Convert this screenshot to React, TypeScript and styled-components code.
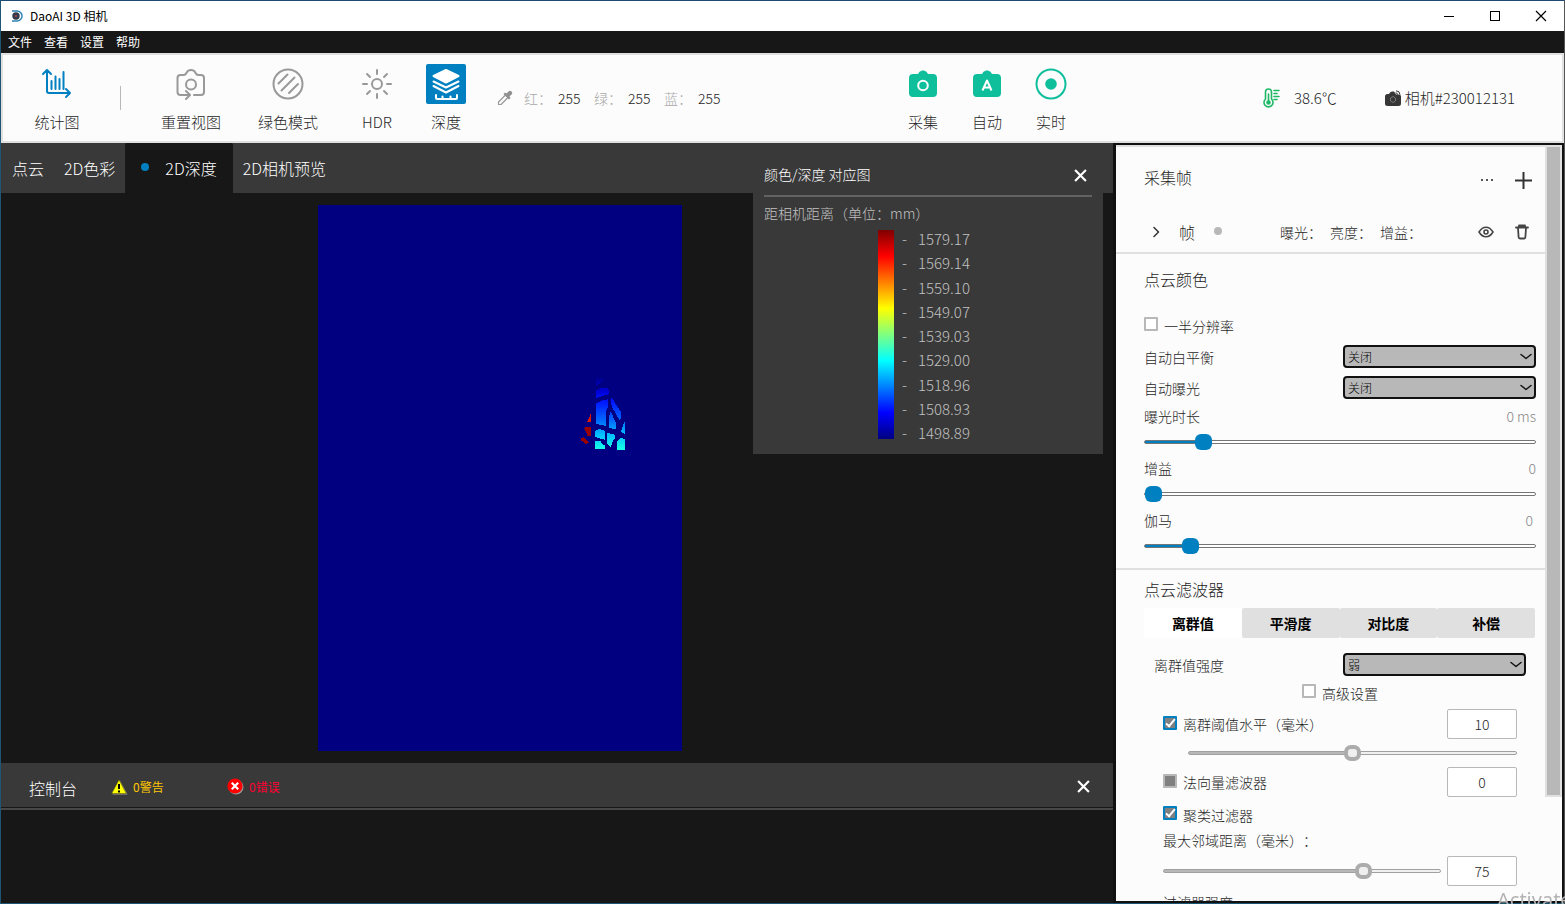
import React, { useState } from "react";
import styled, { createGlobalStyle, css } from "styled-components";

const color = {
  ink: "#1f1f1f",
  dark: "#171717",
  bar: "#393939",
  paper: "#fcfcfc",
  line: "#e0e0e0",
  grey: "#b8b8b8",
  muted: "#868686",
  blue: "#0080c0",
  green: "#0fbf9c",
};

const GlobalStyle = createGlobalStyle`
  *, *::before, *::after { box-sizing: border-box; }
  body {
    margin: 0;
    overflow: hidden;
    background: ${color.dark};
    color: ${color.ink};
    font: 300 14px/20px "Noto Sans CJK SC", "Noto Sans", sans-serif;
    text-spacing-trim: space-all;
  }
  button, input, select { font: inherit; color: inherit; margin: 0; }
  button { border: 0; padding: 0; background: none; }
  svg { display: block; flex: none; }
`;

const Window = styled.div`
  height: 100vh;
  display: flex;
  flex-direction: column;
  border: 1px solid #1d5673;
  border-top-color: #1f4a73;
  border-right-color: #555555;
`;

/* Title bar and menu */
const TitleBar = styled.header`
  display: flex;
  align-items: center;
  flex: none;
  height: 30px;
  padding-left: 10px;
  background: #ffffff;
  color: #000000;
`;
const AppName = styled.h1`
  flex: 1;
  margin: 0 0 0 7px;
  font: inherit;
  font-size: 12px;
  font-weight: 400;
`;
const WindowButton = styled.button`
  display: flex;
  align-items: center;
  justify-content: center;
  width: 46px;
  height: 30px;
`;
const MenuBar = styled.nav`
  display: flex;
  align-items: center;
  flex: none;
  gap: 12px;
  height: 22px;
  padding-left: 7px;
  background: ${color.dark};
`;
const MenuItem = styled.button`
  color: #ffffff;
  font-size: 12px;
  font-weight: 400;
  line-height: 20px;
`;

/* Toolbar */
const Toolbar = styled.section`
  display: flex;
  align-items: center;
  flex: none;
  height: 90px;
  padding-right: 47px;
  border: 2px solid ${color.line};
  background: ${color.paper};
`;
const ViewTools = styled.div`
  display: grid;
  grid-template-columns: 108px 31px 98px 96px 82px 56px;
  align-items: center;
`;
const CaptureTools = styled.div`
  display: grid;
  grid-template-columns: repeat(3, 64px);
  margin: 0 auto;
  padding-right: 12px;
`;
const Tool = styled.button`
  display: flex;
  flex-direction: column;
  align-items: center;
  gap: 8px;
  font-size: 15px;
  line-height: 20px;
`;
const ToolIcon = styled.span<{ $active?: boolean }>`
  display: flex;
  align-items: center;
  justify-content: center;
  width: 40px;
  height: 40px;
  border-radius: 2px;
  background: ${(p) => (p.$active ? color.blue : "transparent")};
`;
const Separator = styled.span`
  width: 1px;
  height: 24px;
  margin-left: 9px;
  background: ${color.grey};
`;
const Picker = styled.dl`
  display: flex;
  align-items: center;
  margin: 0 0 0 23px;
  dt { margin-left: 11px; color: #a8a8a8; }
  dd { margin: 0 0 0 6px; width: 25px; }
`;
const Status = styled.div`
  display: flex;
  align-items: center;
  font-size: 15px;
`;
const StatusText = styled.span<{ $gap: number }>`
  margin-left: ${(p) => p.$gap}px;
  & + svg { margin-left: 48px; }
`;

/* Left side */
const Main = styled.main`
  display: flex;
  flex: 1;
  min-height: 0;
`;
const Stage = styled.section`
  position: relative;
  display: flex;
  flex-direction: column;
  flex: 1;
  min-width: 0;
`;
const Tabs = styled.div`
  display: flex;
  flex: none;
  height: 50px;
  padding-left: 1px;
  background: ${color.bar};
`;
const Tab = styled.button<{ $active?: boolean }>`
  display: flex;
  align-items: center;
  gap: 16px;
  padding: 0 10px;
  color: #ffffff;
  font-size: 16px;
  line-height: 24px;
  ${(p) =>
    p.$active &&
    css`
      padding: 0 16px;
      background: ${color.dark};
      border-radius: 2px 2px 0 0;
    `}
`;
const Dot = styled.span<{ $color: string }>`
  width: 8px;
  height: 8px;
  margin-bottom: 2px;
  border-radius: 4px;
  background: ${(p) => p.$color};
`;
const Viewport = styled.div`
  display: flex;
  align-items: center;
  justify-content: center;
  flex: 1;
  min-height: 0;
  padding: 12px 115px 12px 0;
`;
const DepthMap = styled.svg`
  height: 100%;
  background: #000080;
`;

const Legend = styled.aside`
  position: absolute;
  top: 0;
  right: 10px;
  width: 350px;
  padding: 12px 11px 9px;
  background: ${color.bar};
  color: #c2c2c2;
`;
const LegendHead = styled.div`
  display: flex;
  align-items: center;
  justify-content: space-between;
  height: 42px;
  padding-right: 5px;
  border-bottom: 2px solid #626262;
  color: #ffffff;
`;
const LegendTitle = styled.h2`
  margin: 0;
  padding-bottom: 2px;
  font: inherit;
`;
const LegendUnit = styled.p`
  margin: 6px 0 4px;
`;
const Scale = styled.div`
  display: flex;
  padding-left: 114px;
`;
const ScaleBar = styled.div`
  width: 16px;
  height: 209px;
  margin: 3px 8px 0 0;
  background: linear-gradient(#800000, #ff0000 12.5%, #ffff00 37.5%, #00ffff 62.5%, #0000ff 87.5%, #000080);
`;
const ScaleTicks = styled.ul`
  display: flex;
  flex-direction: column;
  justify-content: space-between;
  height: 218px;
  margin: 0;
  padding: 0;
  list-style: none;
  font-size: 15px;
  line-height: 24px;
`;
const Tick = styled.li`
  display: flex;
  gap: 11px;
`;

const Console = styled.section`
  flex: none;
  height: 140px;
`;
const ConsoleHead = styled.div`
  display: flex;
  align-items: center;
  height: 47px;
  padding: 2px 23px 0 28px;
  background: ${color.bar};
  border-bottom: 2px solid #484848;
  box-shadow: inset 0 -1px ${color.dark};
`;
const ConsoleTitle = styled.h2`
  width: 82px;
  margin: 0;
  padding-top: 2px;
  color: #ffffff;
  font: inherit;
  font-size: 16px;
  line-height: 24px;
`;
const Count = styled.span<{ $color: string }>`
  display: flex;
  align-items: center;
  gap: 5px;
  width: 116px;
  color: ${(p) => p.$color};
  font-size: 12px;
  font-weight: 400;
`;
const CloseButton = styled.button`
  display: flex;
  margin-left: auto;
`;

/* Settings panel */
const Side = styled.aside`
  display: flex;
  flex: none;
  width: 451px;
  border: 2px solid #111111;
  border-left-width: 3px;
  background: ${color.paper};
  overflow: hidden;
`;
const Settings = styled.div`
  flex: 1;
  min-width: 0;
  border-top: 2px solid ${color.line};
`;
const ScrollRail = styled.div`
  flex: none;
  width: 17px;
`;
const ScrollThumb = styled.div`
  height: 652px;
  border: 2px solid ${color.line};
  background: ${color.grey};
`;
const Section = styled.section<{ $bottom: number }>`
  padding: 0 9px ${(p) => p.$bottom}px 28px;
  border-bottom: 2px solid ${color.line};
  &:last-child { border-bottom: 0; }
`;
const Row = styled.div<{ $h: number; $top?: number; $indent?: number; $end?: number }>`
  display: flex;
  align-items: center;
  justify-content: space-between;
  height: ${(p) => p.$h}px;
  padding: ${(p) => p.$top ?? 0}px ${(p) => p.$end ?? 0}px 0 ${(p) => p.$indent ?? 0}px;
`;
const SectionTitle = styled.h2`
  margin: 0;
  font: inherit;
  font-size: 16px;
  line-height: 24px;
`;
const PanelTitle = styled(SectionTitle)`
  padding-bottom: 6px;
`;
const FrameFacts = styled.div`
  display: flex;
  gap: 8px;
  margin-left: 58px;
  flex: 1;
`;
const IconGroup = styled.div`
  display: flex;
  align-items: center;
  gap: 21px;
`;
const FrameName = styled.div`
  display: flex;
  align-items: center;
  gap: 19px;
  font-size: 16px;
`;
const Value = styled.output`
  color: ${color.muted};
`;
const SelectBox = styled.div<{ $w: number }>`
  position: relative;
  width: ${(p) => p.$w}px;
  svg { position: absolute; right: 4px; top: 8px; pointer-events: none; }
`;
const Select = styled.select`
  display: block;
  appearance: none;
  width: 100%;
  height: 23px;
  padding: 0 3px;
  border: 2px solid #111111;
  border-radius: 4px;
  background: ${color.grey};
  color: #000000;
  font-size: 12px;
`;
const CheckLabel = styled.label`
  display: flex;
  align-items: center;
  gap: 6px;
`;
const Check = styled.input<{ $filled?: boolean }>`
  appearance: none;
  position: relative;
  width: 14px;
  height: 14px;
  margin-bottom: 3px;
  border: 2px solid ${color.grey};
  border-radius: 1px;
  background: ${(p) => (p.$filled ? "#808080" : "#ffffff")};
  &:checked { border-color: ${color.blue}; background: #808080; }
  &:checked::after {
    content: "";
    position: absolute;
    left: 3px;
    top: -1px;
    width: 5px;
    height: 10px;
    border: solid #ffffff;
    border-width: 0 2px 2px 0;
    transform: rotate(40deg);
  }
`;
const Range = styled.input<{ $grey?: boolean }>`
  appearance: none;
  display: block;
  flex: 1;
  min-width: 0;
  height: 16px;
  background: none;
  &::-webkit-slider-runnable-track {
    height: 4px;
    border: 1px solid ${(p) => (p.$grey ? "#a0a0a0" : "#757575")};
    border-radius: 2px;
    background: linear-gradient(
      to right,
      ${(p) => (p.$grey ? color.grey : color.blue)} var(--fill),
      ${(p) => (p.$grey ? "#f0f0f0" : "#ffffff")} var(--fill)
    );
  }
  &::-webkit-slider-thumb {
    appearance: none;
    width: 17px;
    height: 16px;
    margin-top: -7px;
    border: ${(p) => (p.$grey ? "4px solid #acacac" : "0")};
    border-radius: ${(p) => (p.$grey ? "7px" : "6px")};
    background: ${(p) => (p.$grey ? "#efefef" : color.blue)};
  }
`;
const NumberBox = styled.input`
  width: 70px;
  height: 30px;
  margin-left: 6px;
  border: 1px solid ${color.grey};
  border-radius: 2px;
  background: #ffffff;
  text-align: center;
`;
const FilterTabs = styled.div`
  display: grid;
  grid-template-columns: repeat(4, 1fr);
  margin: 0 1px 11px 0;
`;
const FilterTab = styled.button<{ $active?: boolean }>`
  height: 30px;
  border-radius: 2px;
  background: ${(p) => (p.$active ? "#ffffff" : color.line)};
  color: #000000;
  font-weight: 700;
`;
const Watermark = styled.span`
  position: fixed;
  left: calc(100% - 68px);
  bottom: -10px;
  color: #b4b4b4;
  font: 400 20px/28px "Noto Sans", sans-serif;
  pointer-events: none;
`;

const Stroke = ({ w, h = w, c, sw = 2, children }: { w: number; h?: number; c: string; sw?: number; children: React.ReactNode }) => (
  <svg width={w} height={h} viewBox={`0 0 ${w} ${h}`} fill="none" stroke={c} strokeWidth={sw} strokeLinecap="round" strokeLinejoin="round">
    {children}
  </svg>
);

const ChartIcon = () => (
  <Stroke w={32} c={color.blue}>
    <path d="M6 3v20q0 2 2 2h21M2 6l4-4 4 4M25 21l4 4-4 4M10.500 13v8M14.500 8.500v12.500M18.500 11v10M22.500 4v17" />
  </Stroke>
);
const ResetIcon = () => (
  <Stroke w={32} c="#999999">
    <path d="M13 27H5.500q-3 0-3-3V10q0-3 3-3h3q2 0 3-2 1-3 4.500-3t4.500 3q1 2 3 2h2.500q3 0 3 3v14q0 3-3 3H19M11 23l4 4-4 4" />
    <circle cx="16" cy="16.500" r="5" />
  </Stroke>
);
const GreenModeIcon = () => (
  <Stroke w={32} c="#999999">
    <circle cx="16" cy="16" r="14.500" />
    <path d="M6.500 15.500l9-9M9.500 22.500l13-13M17 25l9-9" />
  </Stroke>
);
const HdrIcon = () => (
  <Stroke w={32} c="#999999">
    <circle cx="16" cy="16" r="5" />
    <path d="M16 2v4M16 26v4M2 16h4M26 16h4M6 6l3 3M23 23l3 3M26 6l-3 3M9 23l-3 3" />
  </Stroke>
);
const DepthIcon = () => (
  <svg width="32" height="34" viewBox="0 0 32 34" fill="none" stroke="#ffffff" strokeWidth="2" strokeLinecap="round" strokeLinejoin="round">
    <path d="M16 3l12.500 6L16 15.500 3.500 9z" fill="#ffffff" />
    <path d="M3.500 14.500L16 20.500l12.500-6M3.500 19L16 25.500 28.500 19M6 28v3q0 1 1 1h19q1 0 1-1v-3M12.500 29.500V32M20.500 29.500V32" />
  </svg>
);
const DropperIcon = () => (
  <svg width="16" height="16" viewBox="0 0 16 16">
    <path d="M8.500 5l2.500 2.500-7 7H1.500v-2.500z" fill="none" stroke="#999999" strokeWidth="1.200" strokeLinejoin="round" />
    <path d="M6.500 4L8 2.500l1.500 1 2-2q1.500-1.500 3 0t0 3l-2 2 1 1.500L12 9.500z" fill="#909090" />
  </svg>
);
const cameraBody = "M10 5q1-3 4-3.500h2q3 .5 4 3.500h5q4 0 4 4v15q0 4-4 4H5q-4 0-4-4V9q0-4 4-4z";
const CaptureIcon = () => (
  <svg width="30" height="30" viewBox="0 0 30 30">
    <path d={cameraBody} fill={color.green} />
    <circle cx="15" cy="16.500" r="4.800" fill="none" stroke="#ffffff" strokeWidth="2" />
  </svg>
);
const AutoIcon = () => (
  <svg width="30" height="30" viewBox="0 0 30 30">
    <path d={cameraBody} fill={color.green} />
    <path d="M10.500 21.500L15 11.500l4.500 10M12 18.500h6" fill="none" stroke="#ffffff" strokeWidth="2" strokeLinejoin="round" />
  </svg>
);
const LiveIcon = () => (
  <svg width="32" height="32" viewBox="0 0 32 32">
    <circle cx="16" cy="16" r="14.500" fill="none" stroke={color.green} strokeWidth="2" />
    <circle cx="16" cy="16" r="5.800" fill={color.green} />
  </svg>
);
const ThermoIcon = () => (
  <Stroke w={18} h={20} c="#1fb866" sw={1.6}>
    <path d="M2.500 11V4q0-3 3-3t3 3v7a4.500 4.500 0 1 1-6 0M11 2.500h5M11 5.500h3M11 8.500h5M11 11.500h3" />
    <path d="M5.500 6v8" />
    <circle cx="5.500" cy="14.500" r="1.500" fill="#1fb866" />
  </Stroke>
);
const CameraIcon = () => (
  <svg width="16" height="17" viewBox="0 0 16 17">
    <path d="M4 4q1-2.500 3-2.500h2l2 3h2q3 0 3 2v7q0 2.500-2.500 2.500h-11Q0 16 0 13.500V6.500Q0 4 2.500 4z" fill="#363636" />
    <path d="M8 6.500l2.500 1.500v3L8 12.500 5.500 11V8z" fill="none" stroke="#777777" />
    <path d="M11 .8q4 0 4 4M10.500 2.800q2 0 2.300 2" fill="none" stroke="#363636" />
  </svg>
);
const CloseIcon = ({ size, c, sw = 2 }: { size: number; c: string; sw?: number }) => (
  <svg width={size} height={size} viewBox="0 0 12 12" stroke={c} strokeWidth={sw}>
    <path d="M1 1l10 10M11 1L1 11" />
  </svg>
);
const Chevron = () => (
  <Stroke w={12} h={8} c="#111111" sw={1.5}>
    <path d="M1 1.500l5 4 5-4" />
  </Stroke>
);
const Logo = () => (
  <svg width="12" height="12" viewBox="0 0 12 12" fill="none">
    <path d="M1 1h5a5 5 0 0 1 0 10H1" stroke="#2f83b5" strokeWidth="1.500" />
    <circle cx="5" cy="6" r="3.700" fill="#31384a" />
    <circle cx="5" cy="6" r="1.300" fill="#8a4a4a" />
  </svg>
);
const EyeIcon = () => (
  <Stroke w={16} h={12} c="#444444" sw={1.6}>
    <path d="M1 6q3-4.800 7-4.800T15 6q-3 4.800-7 4.800T1 6z" />
    <circle cx="8" cy="6" r="2" />
  </Stroke>
);
const TrashIcon = () => (
  <Stroke w={14} h={16} c="#444444" sw={1.8}>
    <path d="M1 3.500h12M4 3V1.500h6V3M3 4l.6 9q0 1.500 1.400 1.500h4q1.400 0 1.400-1.500L11 4" />
  </Stroke>
);
const WarningIcon = () => (
  <svg width="17" height="16" viewBox="0 0 17 16">
    <path d="M9 1.500l7.500 14h-15z" fill="#9a9a9a" />
    <path d="M8 .8L15.300 14.500H.7z" fill="#ffff00" stroke="#555500" strokeWidth=".6" />
    <path d="M8 5v5M8 11.500v2" stroke="#000000" strokeWidth="2" />
  </svg>
);
const ErrorIcon = () => (
  <svg width="17" height="17" viewBox="0 0 17 17">
    <circle cx="9" cy="9" r="7.500" fill="#9a9a9a" />
    <circle cx="8" cy="8" r="7.600" fill="#ff0000" />
    <path d="M4.800 4.800l6.400 6.400M11.200 4.800l-6.400 6.400" stroke="#ffffff" strokeWidth="2.200" />
  </svg>
);

const DepthImage = () => (
  <DepthMap viewBox="0 0 364 546" role="img" aria-label="2D深度" shapeRendering="crispEdges">
    <defs>
      <linearGradient id="depth" gradientUnits="userSpaceOnUse" x1="0" y1="50" x2="0" y2="268">
        <stop offset="0" stopColor="#000088" />
        <stop offset=".2" stopColor="#0000d8" />
        <stop offset=".35" stopColor="#0018ff" />
        <stop offset=".6" stopColor="#0068ff" />
        <stop offset=".78" stopColor="#00b8ff" />
        <stop offset="1" stopColor="#18ffe6" />
      </linearGradient>
    </defs>
    <g transform="translate(242 155) scale(.3333)">
      <path
        fill="url(#depth)"
        d="M108 54l20 3v5l-10 9-10 6zM108 91l16-7 20-1 3 14-2 6-20 6-17 5zM108 131l20-10 17-3-1 24-6 10v46l-14-3-16-4zM154 112l6 6 5 12 10 14 9 12v19l-6 5-9-17-11-18-5-16zM150 152l6 10 6 14 7 16v17l-10-2-12-5v-22zM195 184v38l-12-6 4-14 5-15zM105 213l12-6 18 6v26l-14-3-16-6zM141 218l25 7-2 10-6 9-6 17-12-10zM105 243l16 1 10 10 4 4v9h-30zM183 233l12 6v31h-25v-23l6-7z"
      />
      <path fill="#dc1800" d="M93 158v28H81l6-12z" />
      <path fill="#980000" d="M72 204l9-3h12v27H83l-6-14zM63 233l10-1 8 9 6 8-12 3-4-7-8-3z" />
    </g>
  </DepthMap>
);

const ticks = ["1579.17", "1569.14", "1559.10", "1549.07", "1539.03", "1529.00", "1518.96", "1508.93", "1498.89"];

function Slider({ start, label, grey }: { start: number; label: string; grey?: boolean }) {
  const [value, setValue] = useState(start);
  return (
    <Range
      type="range"
      min={0}
      max={1000}
      value={value}
      $grey={grey}
      aria-label={label}
      onChange={(e) => setValue(Number(e.target.value))}
      style={{ "--fill": `${value / 10}%` } as React.CSSProperties}
    />
  );
}

function Choice({ id, label, value, width }: { id: string; label: string; value: string; width: number }) {
  return (
    <>
      <label htmlFor={id}>{label}</label>
      <SelectBox $w={width}>
        <Select id={id}>
          <option>{value}</option>
        </Select>
        <Chevron />
      </SelectBox>
    </>
  );
}

export default function App() {
  return (
    <Window>
      <GlobalStyle />
      <TitleBar>
        <Logo />
        <AppName>DaoAI 3D 相机</AppName>
        <WindowButton aria-label="最小化">
          <svg width="10" height="10" shapeRendering="crispEdges"><path d="M0 5.500h10" stroke="#000" /></svg>
        </WindowButton>
        <WindowButton aria-label="最大化">
          <svg width="10" height="10" shapeRendering="crispEdges"><path d="M.5.5h9v9h-9z" fill="none" stroke="#000" /></svg>
        </WindowButton>
        <WindowButton aria-label="关闭">
          <CloseIcon size={12} c="#000000" sw={1.2} />
        </WindowButton>
      </TitleBar>
      <MenuBar>
        {["文件", "查看", "设置", "帮助"].map((m) => (
          <MenuItem key={m}>{m}</MenuItem>
        ))}
      </MenuBar>

      <Toolbar>
        <ViewTools>
          <Tool><ToolIcon><ChartIcon /></ToolIcon>统计图</Tool>
          <Separator />
          <Tool><ToolIcon><ResetIcon /></ToolIcon>重置视图</Tool>
          <Tool><ToolIcon><GreenModeIcon /></ToolIcon>绿色模式</Tool>
          <Tool><ToolIcon><HdrIcon /></ToolIcon>HDR</Tool>
          <Tool><ToolIcon $active><DepthIcon /></ToolIcon>深度</Tool>
        </ViewTools>
        <Picker>
          <DropperIcon />
          <dt>红：</dt><dd>255</dd>
          <dt>绿：</dt><dd>255</dd>
          <dt>蓝：</dt><dd>255</dd>
        </Picker>
        <CaptureTools>
          <Tool><ToolIcon><CaptureIcon /></ToolIcon>采集</Tool>
          <Tool><ToolIcon><AutoIcon /></ToolIcon>自动</Tool>
          <Tool><ToolIcon><LiveIcon /></ToolIcon>实时</Tool>
        </CaptureTools>
        <Status>
          <ThermoIcon />
          <StatusText $gap={13}>38.6℃</StatusText>
          <CameraIcon />
          <StatusText $gap={4}>相机#230012131</StatusText>
        </Status>
      </Toolbar>

      <Main>
        <Stage>
          <Tabs>
            <Tab>点云</Tab>
            <Tab>2D色彩</Tab>
            <Tab $active><Dot $color={color.blue} />2D深度</Tab>
            <Tab>2D相机预览</Tab>
          </Tabs>
          <Viewport>
            <DepthImage />
          </Viewport>
          <Legend>
            <LegendHead>
              <LegendTitle>颜色/深度 对应图</LegendTitle>
              <CloseButton aria-label="关闭"><CloseIcon size={13} c="#ffffff" /></CloseButton>
            </LegendHead>
            <LegendUnit>距相机距离（单位：mm）</LegendUnit>
            <Scale>
              <ScaleBar />
              <ScaleTicks>
                {ticks.map((t) => (
                  <Tick key={t}><span>-</span>{t}</Tick>
                ))}
              </ScaleTicks>
            </Scale>
          </Legend>
          <Console>
            <ConsoleHead>
              <ConsoleTitle>控制台</ConsoleTitle>
              <Count $color="#ffc800"><WarningIcon />0警告</Count>
              <Count $color="#ff0032"><ErrorIcon />0错误</Count>
              <CloseButton aria-label="关闭"><CloseIcon size={13} c="#ffffff" /></CloseButton>
            </ConsoleHead>
          </Console>
        </Stage>

        <Side>
          <Settings>
            <Section $bottom={2}>
              <Row $h={66} $end={4}>
                <PanelTitle>采集帧</PanelTitle>
                <IconGroup>
                  <button aria-label="更多">
                    <svg width="14" height="4"><path d="M1 1h2v2H1zM6 1h2v2H6zM11 1h2v2h-2z" fill="#555" /></svg>
                  </button>
                  <button aria-label="添加">
                    <svg width="17" height="17"><path d="M8.500 0v17M0 8.500h17" stroke="#333" strokeWidth="2" /></svg>
                  </button>
                </IconGroup>
              </Row>
              <Row $h={37} $indent={9} $end={7}>
                <FrameName>
                  <Stroke w={7} h={12} c="#333333" sw={1.5}><path d="M1 1.500L5.500 6 1 10.500" /></Stroke>
                  帧
                  <Dot $color={color.grey} />
                </FrameName>
                <FrameFacts>
                  <span>曝光：</span><span>亮度：</span><span>增益：</span>
                </FrameFacts>
                <IconGroup>
                  <button aria-label="显示"><EyeIcon /></button>
                  <button aria-label="删除"><TrashIcon /></button>
                </IconGroup>
              </Row>
            </Section>

            <Section $bottom={9}>
              <Row $h={50}><SectionTitle>点云颜色</SectionTitle></Row>
              <Row $h={37} $top={6}>
                <CheckLabel><Check type="checkbox" />一半分辨率</CheckLabel>
              </Row>
              <Row $h={31}><Choice id="wb" label="自动白平衡" value="关闭" width={193} /></Row>
              <Row $h={31}><Choice id="ae" label="自动曝光" value="关闭" width={193} /></Row>
              <Row $h={26}><span>曝光时长</span><Value>0 ms</Value></Row>
              <Row $h={26}><Slider start={133} label="曝光时长" /></Row>
              <Row $h={26}><span>增益</span><Value>0</Value></Row>
              <Row $h={26}><Slider start={0} label="增益" /></Row>
              <Row $h={26} $end={3}><span>伽马</span><Value>0</Value></Row>
              <Row $h={26}><Slider start={99} label="伽马" /></Row>
            </Section>

            <Section $bottom={9}>
              <Row $h={38}><SectionTitle>点云滤波器</SectionTitle></Row>
              <FilterTabs>
                <FilterTab $active>离群值</FilterTab>
                <FilterTab>平滑度</FilterTab>
                <FilterTab>对比度</FilterTab>
                <FilterTab>补偿</FilterTab>
              </FilterTabs>
              <Row $h={31} $indent={10} $end={10}>
                <Choice id="strength" label="离群值强度" value="弱" width={183} />
              </Row>
              <Row $h={25} $indent={158}>
                <CheckLabel><Check type="checkbox" />高级设置</CheckLabel>
              </Row>
              <Row $h={38} $indent={19} $end={19}>
                <CheckLabel><Check type="checkbox" defaultChecked />离群阈值水平（毫米）</CheckLabel>
                <NumberBox aria-label="离群阈值水平" defaultValue="10" />
              </Row>
              <Row $h={20} $indent={44} $end={19}><Slider start={500} label="离群阈值水平" grey /></Row>
              <Row $h={38} $indent={19} $end={19}>
                <CheckLabel><Check type="checkbox" $filled />法向量滤波器</CheckLabel>
                <NumberBox aria-label="法向量滤波器" defaultValue="0" />
              </Row>
              <Row $h={27} $indent={19}>
                <CheckLabel><Check type="checkbox" defaultChecked />聚类过滤器</CheckLabel>
              </Row>
              <Row $h={24} $indent={19}><span>最大邻域距离（毫米）：</span></Row>
              <Row $h={38} $indent={19} $end={19}>
                <Slider start={736} label="最大邻域距离" grey />
                <NumberBox aria-label="最大邻域距离" defaultValue="75" />
              </Row>
              <Row $h={24} $indent={19}><span>过滤器强度</span></Row>
            </Section>
          </Settings>
          <ScrollRail><ScrollThumb /></ScrollRail>
        </Side>
      </Main>
      <Watermark>Activate</Watermark>
    </Window>
  );
}
